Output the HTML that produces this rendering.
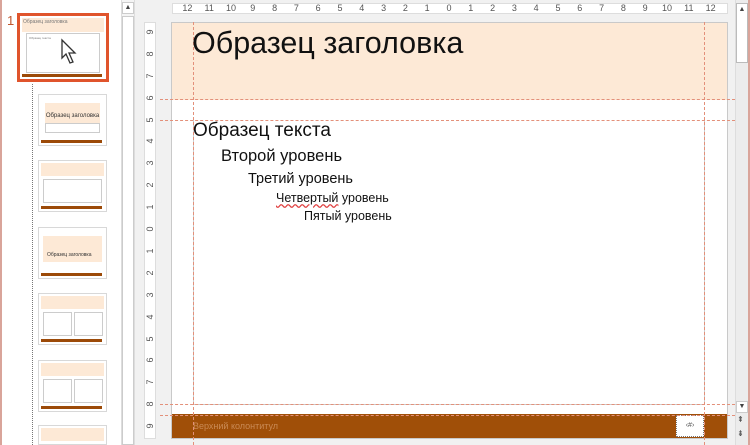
<!DOCTYPE html>
<html><head><meta charset="utf-8"><style>
*{margin:0;padding:0;box-sizing:border-box}
html,body{width:750px;height:445px;overflow:hidden}
body{position:relative;background:#f1f1f1;font-family:"Liberation Sans","DejaVu Sans",sans-serif}
.a{position:absolute}
.t{position:absolute;left:38px;width:69px;height:52px;background:#fff;border:1px solid #d8d8d8}
.t .h{position:absolute;left:2px;right:2px;top:2px;height:13px;background:#fde9d6}
.t .f{position:absolute;left:2px;right:4px;bottom:2px;height:3px;background:#9c4a08}
.t .b{position:absolute;left:4px;right:4px;top:18px;bottom:8px;border:1px solid #ccc}
.gh{position:absolute;height:0;border-top:1px dashed #e3907a}
.gv{position:absolute;width:0;border-left:1px dashed #e3907a}
.txt{position:absolute;white-space:nowrap;color:#111;font-family:"Liberation Sans",sans-serif}
</style></head><body>
<div class="a" style="left:0;top:0;width:121px;height:445px;background:#fff;border-left:2px solid #d9a49a"></div>
<div class="a" style="left:7px;top:13px;font-size:13px;color:#c0562e">1</div>
<div class="a" style="left:17px;top:13px;width:92px;height:69px;border:3px solid #e0542c;background:#fff">
 <div class="a" style="left:2px;top:2px;right:2px;height:14px;background:#fde9d6;font-size:5px;color:#777;padding:1px">Образец заголовка</div>
 <div class="a" style="left:6px;top:17px;right:6px;height:40px;border:1px solid #ccc;font-size:3px;color:#777;padding:2px">Образец текста</div>
 <div class="a" style="left:2px;right:4px;bottom:2px;height:3px;background:#9c4a08"></div>
 <svg class="a" style="left:40px;top:22px" width="20" height="28" viewBox="0 0 20 28"><path d="M2 2 L2 20 L6 16 L10 25 L13 24 L9 15 L15 15 Z" fill="#fff" stroke="#333" stroke-width="1.3"/></svg>
</div>
<div class="a" style="left:32px;top:84px;height:361px;border-left:1px dotted #777"></div>
<div class="t" style="top:94px"><div class="a" style="left:6px;top:8px;right:6px;height:20px;background:#fde9d6;font-size:6px;text-align:center;padding-top:10px;color:#333">Образец заголовка</div><div class="a" style="left:6px;top:28px;right:6px;height:10px;border:1px solid #ccc"></div><div class="f"></div></div>
<div class="t" style="top:160px"><div class="h"></div><div class="b"></div><div class="f"></div></div>
<div class="t" style="top:227px"><div class="a" style="left:4px;top:8px;right:4px;height:26px;background:#fde9d6;font-size:5px;color:#333;padding-top:16px;padding-left:4px">Образец заголовка</div><div class="f"></div></div>
<div class="t" style="top:293px"><div class="h"></div><div class="a" style="left:4px;top:18px;width:29px;bottom:8px;border:1px solid #ccc"></div><div class="a" style="left:35px;top:18px;width:29px;bottom:8px;border:1px solid #ccc"></div><div class="f"></div></div>
<div class="t" style="top:360px"><div class="h"></div><div class="a" style="left:4px;top:18px;width:29px;bottom:8px;border:1px solid #ccc"></div><div class="a" style="left:35px;top:18px;width:29px;bottom:8px;border:1px solid #ccc"></div><div class="f"></div></div>
<div class="t" style="top:425px;height:20px"><div class="h"></div></div>
<div class="a" style="left:121px;top:0;width:14px;height:445px;background:#f4f4f4;border-left:1px solid #ddd;border-right:1px solid #ddd"></div>
<div class="a" style="left:122px;top:2px;width:12px;height:12px;background:#fff;border:1px solid #ccc;font-size:7px;text-align:center;line-height:10px;color:#444">▲</div>
<div class="a" style="left:122px;top:16px;width:12px;height:429px;background:#fff;border:1px solid #ccc"></div>
<div class="a" style="left:172px;top:3px;width:556px;height:11px;background:#fff;border:1px solid #ddd"></div>
<div class="a" style="left:144px;top:22px;width:12px;height:417px;background:#fff;border:1px solid #ddd"></div>
<div id="hr"></div>
<div class="a" style="left:171px;top:22px;width:557px;height:417px;background:#fff;border:1px solid #c9c9c9"></div>
<div class="a" style="left:172px;top:23px;width:555px;height:77px;background:#fde9d6"></div>
<div class="a" style="left:193px;top:120px;width:512px;height:285px;border:1px solid #ccc;border-top:none"></div>
<div class="a" style="left:172px;top:414px;width:555px;height:24px;background:#a04f08"></div>
<div class="a" style="left:193px;top:421px;font-size:9px;color:#c98a55">Верхний колонтитул</div>
<div class="a" style="left:676px;top:415px;width:28px;height:22px;background:#fff;border:1px dotted #777;font-size:7px;text-align:center;line-height:20px;color:#555">‹#›</div>
<div class="gh" style="left:160px;width:575px;top:99px"></div>
<div class="gh" style="left:160px;width:575px;top:120px"></div>
<div class="gh" style="left:160px;width:575px;top:404px"></div>
<div class="gh" style="left:160px;width:575px;top:415px"></div>
<div class="gv" style="left:193px;top:22px;height:423px"></div>
<div class="gv" style="left:704px;top:22px;height:423px"></div>
<div class="txt" style="left:192px;top:26px;font-size:30.5px">Образец заголовка</div>
<div class="txt" style="left:193px;top:120px;font-size:19px">Образец текста</div>
<div class="txt" style="left:221px;top:147px;font-size:16.5px">Второй уровень</div>
<div class="txt" style="left:248px;top:171px;font-size:14.5px">Третий уровень</div>
<div class="txt" style="left:276px;top:191px;font-size:12.5px"><span style="text-decoration:underline wavy #e04040">Четвертый</span> уровень</div>
<div class="txt" style="left:304px;top:209px;font-size:12.5px">Пятый уровень</div>
<div class="a" style="left:735px;top:0;width:15px;height:445px;background:#ececec;border-left:1px solid #ddd;border-right:2px solid #d9a49a"></div>
<div class="a" style="left:736px;top:3px;width:12px;height:60px;background:#fff;border:1px solid #bbb;font-size:7px;text-align:center;line-height:12px;color:#444">▲</div>
<div class="a" style="left:736px;top:401px;width:12px;height:12px;background:#fff;border:1px solid #ccc;font-size:7px;text-align:center;line-height:10px;color:#444">▼</div>
<div class="a" style="left:737px;top:415px;font-size:8px;color:#444">⇞</div>
<div class="a" style="left:737px;top:429px;font-size:8px;color:#444">⇟</div>
<script>
var h='';
for(var i=-12;i<=12;i++){var x=449+i*21.8;h+='<div class="a" style="left:'+(x-6)+'px;top:3px;width:12px;text-align:center;font-size:9px;color:#555">'+Math.abs(i)+'</div>';}
for(var i=-9;i<=9;i++){var y=229+i*21.9;h+='<div class="a" style="left:144px;top:'+(y-5)+'px;width:12px;height:10px;text-align:center;font-size:9px;line-height:10px;color:#555;transform:rotate(-90deg)">'+Math.abs(i)+'</div>';}
document.getElementById('hr').innerHTML=h;
</script>
</body></html>
